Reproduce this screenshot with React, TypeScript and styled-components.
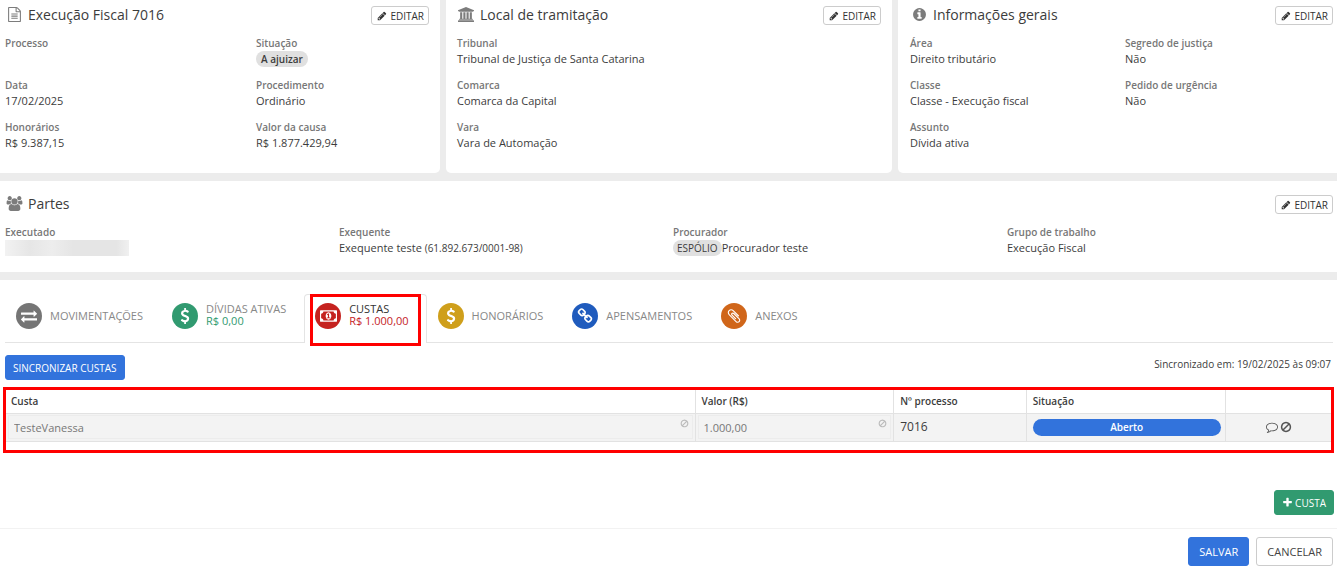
import React from 'react';
import styled, { createGlobalStyle } from 'styled-components';

const GlobalStyle = createGlobalStyle`
  *, *::before, *::after { box-sizing: border-box; }
  body {
    margin: 0;
    background: #ececec;
    color: #3c3c3c;
    font-family: 'Open Sans', 'Noto Sans', sans-serif;
    font-size: 11px;
    line-height: 16px;
  }
  button, input { font-family: inherit; }
`;

const glyphs = {
  file: { w: 1792, d: 'M1596 380q28 28 48 76t20 88v1152q0 40-28 68t-68 28h-1344q-40 0-68-28t-28-68v-1600q0-40 28-68t68-28h896q40 0 88 20t76 48zm-444-244v376h376q-10-29-22-41l-313-313q-12-12-41-22zm384 1528v-1024h-416q-40 0-68-28t-28-68v-416h-768v1536h1280zm-1024-864q0-14 9-23t23-9h704q14 0 23 9t9 23v64q0 14-9 23t-23 9h-704q-14 0-23-9t-9-23v-64zm736 224q14 0 23 9t9 23v64q0 14-9 23t-23 9h-704q-14 0-23-9t-9-23v-64q0-14 9-23t23-9h704zm0 256q14 0 23 9t9 23v64q0 14-9 23t-23 9h-704q-14 0-23-9t-9-23v-64q0-14 9-23t23-9h704z' },
  university: { w: 1920, d: 'M960 0l960 384v128h-128q0 26-20.5 45t-48.5 19h-1526q-28 0-48.5-19t-20.5-45h-128v-128zm-704 640h256v768h128v-768h256v768h128v-768h256v768h128v-768h256v768h59q28 0 48.5 19t20.5 45v64h-1664v-64q0-26 20.5-45t48.5-19h59zm1595 960q28 0 48.5 19t20.5 45v128h-1920v-128q0-26 20.5-45t48.5-19z' },
  info: { w: 1792, d: 'M1152 1376v-160q0-14-9-23t-23-9h-96v-512q0-14-9-23t-23-9h-320q-14 0-23 9t-9 23v160q0 14 9 23t23 9h96v320h-96q-14 0-23 9t-9 23v160q0 14 9 23t23 9h448q14 0 23-9t9-23zm-128-896v-160q0-14-9-23t-23-9h-192q-14 0-23 9t-9 23v160q0 14 9 23t23 9h192q14 0 23-9t9-23zm640 416q0 209-103 385.5t-279.5 279.5-385.5 103-385.5-103-279.5-279.5-103-385.5 103-385.5 279.5-279.5 385.5-103 385.5 103 279.5 279.5 103 385.5z' },
  users: { w: 2048, d: 'M657 896q-162 5-265 128h-134q-82 0-138-40.5t-56-118.5q0-353 124-353 6 0 43.5 21t97.5 42.5 119 21.5q67 0 133-23-5 37-5 66 0 159 81 256zm1071 637q0 120-73 189.5t-194 69.5h-874q-121 0-194-69.5t-73-189.5q0-53 3.5-103.5t14-109 26.5-108.5 43-97.5 62-81 85.5-53.5 111.5-20q10 0 43 21.5t73 48 107 48 135 21.5 135-21.5 107-48 73-48 43-21.5q61 0 111.5 20t85.5 53.5 62 81 43 97.5 26.5 108.5 14 109 3.5 103.5zm-1024-1277q0 106-75 181t-181 75-181-75-75-181 75-181 181-75 181 75 75 181zm704 384q0 159-112.5 271.5t-271.5 112.5-271.5-112.5-112.5-271.5 112.5-271.5 271.5-112.5 271.5 112.5 112.5 271.5zm576 225q0 78-56 118.5t-138 40.5h-134q-103-123-265-128 81-97 81-256 0-29-5-66 66 23 133 23 59 0 119-21.5t97.5-42.5 43.5-21q124 0 124 353zm-128-609q0 106-75 181t-181 75-181-75-75-181 75-181 181-75 181 75 75 181z' },
  pencil: { w: 1792, d: 'M491 1536l91-91-235-235-91 91v107h128v128h107zm523-928q0-22-22-22-10 0-17 7l-542 542q-7 7-7 17 0 22 22 22 10 0 17-7l542-542q7-7 7-17zm-54-192l416 416-832 832h-416v-416zm683 96q0 53-37 90l-166 166-416-416 166-165q36-38 90-38 53 0 91 38l235 234q37 39 37 91z' },
  exchange: { w: 1792, d: 'M1792 1184v192q0 13-9.5 22.5t-22.5 9.5h-1376v192q0 13-9.5 22.5t-22.5 9.5q-12 0-24-10l-319-320q-9-9-9-22 0-14 9-23l320-320q9-9 23-9 13 0 22.5 9.5t9.5 22.5v192h1376q13 0 22.5 9.5t9.5 22.5zm0-544q0 14-9 23l-320 320q-9 9-23 9-13 0-22.5-9.5t-9.5-22.5v-192h-1376q-13 0-22.5-9.5t-9.5-22.5v-192q0-13 9.5-22.5t22.5-9.5h1376v-192q0-14 9-23t23-9q12 0 24 10l319 319q9 9 9 23z' },
  dollar: { w: 1792, d: 'M1362 1185q0 153-99.5 263.5t-258.5 136.5v175q0 14-9 23t-23 9h-135q-13 0-22.5-9.5t-9.5-22.5v-175q-66-9-127.5-31t-101.5-44.5-74-48-46.5-37.5-17.5-18q-17-21-2-41l103-135q7-10 23-12 15-2 24 9l2 2q113 99 243 125 37 8 74 8 81 0 142.5-43t61.5-122q0-28-15-53t-33.5-42-58.5-37.5-66-32-80-32.5q-39-16-61.5-25t-61.5-26.5-62.5-31-56.5-35.5-53.5-42.5-43.5-49-35.5-58-21-66.5-8.5-78q0-138 98-242t255-134v-180q0-13 9.5-22.5t22.5-9.5h135q14 0 23 9t9 23v176q57 6 110.5 23t87 33.5 63.5 37.5 39 29 15 14q17 18 5 38l-81 146q-8 15-23 16-14 3-27-7-3-3-14.5-12t-39-26.5-58.5-32-74.5-26-85.5-11.5q-95 0-155 43t-60 111q0 26 8.5 48t29.5 41.5 39.5 33 56 31 60.5 27 70 27.5q53 20 81 31.5t76 35 75.5 42.5 62 50 53 63.5 31.5 76.5 13 94z' },
  money: { w: 1920, d: 'M768 1152h384v-96h-128v-448h-114l-148 137 77 80q42-37 55-57h2v288h-128v96zm512-256q0 70-21 142t-59.5 134-101.5 101-138 39-138-39-101.5-101-59.5-134-21-142 21-142 59.5-134 101.5-101 138-39 138 39 101.5 101 59.5 134 21 142zm512 256v-512q-106 0-181-75t-75-181h-1152q0 106-75 181t-181 75v512q106 0 181 75t75 181h1152q0-106 75-181t181-75zm128-832v1152q0 26-19 45t-45 19h-1792q-26 0-45-19t-19-45v-1152q0-26 19-45t45-19h1792q26 0 45 19t19 45z' },
  link: { w: 1792, d: 'M1520 1216q0-40-28-68l-208-208q-28-28-68-28-42 0-72 32 3 3 19 18.5t21.5 21.5 15 19 13 25.5 3.5 27.5q0 40-28 68t-68 28q-15 0-27.5-3.5t-25.5-13-19-15-21.5-21.5-18.5-19q-33 31-33 73 0 40 28 68l206 207q27 27 68 27 40 0 68-26l147-146q28-28 28-67zm-703-705q0-40-28-68l-206-207q-28-28-68-28-39 0-68 27l-147 146q-28 28-28 67 0 40 28 68l208 208q27 27 68 27 42 0 72-31-3-3-19-18.5t-21.5-21.5-15-19-13-25.5-3.5-27.5q0-40 28-68t68-28q15 0 27.5 3.5t25.5 13 19 15 21.5 21.5 18.5 19q33-31 33-73zm895 705q0 120-85 203l-147 146q-83 83-203 83-121 0-204-85l-206-207q-83-83-83-203 0-123 88-209l-88-88q-86 88-208 88-120 0-204-84l-208-208q-84-84-84-204t85-203l147-146q83-83 203-83 121 0 204 85l206 207q83 83 83 203 0 123-88 209l88 88q86-88 208-88 120 0 204 84l208 208q84 84 84 204z' },
  clip: { w: 1792, d: 'M1596 1385q0 117-79 196t-196 79q-135 0-235-100l-777-776q-113-115-113-271 0-159 110-270t269-111q158 0 273 113l605 606q10 10 10 22 0 16-30.5 46.5t-46.5 30.5q-13 0-23-10l-606-607q-79-77-181-77-106 0-179 75t-73 181q0 105 76 181l776 777q63 63 145 63 64 0 106-42t42-106q0-82-63-145l-581-581q-26-24-60-24-29 0-48 19t-19 48q0 32 25 59l410 410q10 10 10 22 0 16-31 47t-47 31q-12 0-22-10l-410-410q-63-61-63-149 0-82 57-139t139-57q88 0 149 63l581 581q100 98 100 235z' },
  ban: { w: 1792, d: 'M1440 893q0-161-87-295l-754 753q137 89 297 89 111 0 211.5-43.5t173.5-116.5 116-174.5 43-212.5zm-999 299l755-754q-135-91-300-91-148 0-273 73t-198 199-73 274q0 162 89 299zm1223-299q0 157-61 300t-163.5 246-245 164-298.5 61-298.5-61-245-164-163.5-246-61-300 61-299.5 163.5-245.5 245-164 298.5-61 298.5 61 245 164 163.5 245.5 61 299.5z' },
  comment: { w: 1792, d: 'M896 384q-204 0-381.5 69.5t-282 187.5-104.5 255q0 112 71.5 213.5t201.5 175.5l87 50-27 96q-24 91-70 172 152-63 275-171l43-38 57 6q69 8 130 8 204 0 381.5-69.5t282-187.5 104.5-255-104.5-255-282-187.5-381.5-69.5zm896 512q0 174-120 321.5t-326 233-450 85.5q-70 0-145-8-198 175-460 242-49 14-114 22h-5q-15 0-27-10.5t-16-27.5v-1q-3-4-.5-12t2-10 4.5-9.5l6-9 7-8.5 8-9q7-8 31-34.5t34.5-38 31-39.5 32.5-51 27-59 26-76q-157-89-247.5-220t-90.5-281q0-174 120-321.5t326-233 450-85.5 450 85.5 326 233 120 321.5z' },
  plus: { w: 1792, d: 'M1600 736v192q0 40-28 68t-68 28h-416v416q0 40-28 68t-68 28h-192q-40 0-68-28t-28-68v-416h-416q-40 0-68-28t-28-68v-192q0-40 28-68t68-28h416v-416q0-40 28-68t68-28h192q40 0 68 28t28 68v416h416q40 0 68 28t28 68z' },
};

type GlyphName = keyof typeof glyphs;

const Svg = styled.svg`
  display: block;
  flex: none;
  fill: currentColor;
`;

function Icon({ name, size }: { name: GlyphName; size: number }) {
  const { w, d } = glyphs[name];
  return (
    <Svg viewBox={`0 0 ${w} 1792`} width={Math.round((size * w) / 1792)} height={size} aria-hidden="true">
      <path d={d} />
    </Svg>
  );
}

const Page = styled.main`
  display: flex;
  flex-direction: column;
  gap: 8px;
`;

const TopCards = styled.div`
  display: grid;
  grid-template-columns: 440fr 446fr 439fr;
  gap: 6px;
`;

const Card = styled.section<{ $side?: 'left' | 'middle' | 'right' }>`
  background: #fff;
  padding: 6px 4px 22px ${p => (p.$side === 'right' ? 12 : p.$side === 'middle' ? 11 : 5)}px;
  padding-right: ${p => (p.$side === 'left' || p.$side === 'middle' ? 11 : 4)}px;
  border-radius: ${p => (p.$side === 'left' ? '0 0 5px 0' : p.$side === 'middle' ? '0 0 5px 5px' : p.$side === 'right' ? '0 0 0 5px' : '0')};
`;

const PartiesCard = styled(Card)`
  padding: 14px 0 16px 5px;
`;

const CardHeader = styled.header`
  display: flex;
  align-items: flex-start;
  height: 19px;
  margin-bottom: 10px;
  ${PartiesCard} & { padding-right: 4px; }
`;

const IconSlot = styled.span`
  display: flex;
  justify-content: center;
  width: 18px;
  margin-right: 5px;
  padding-top: 1px;
  color: #7c7c7c;
`;

const Title = styled.h2`
  flex: 1;
  margin: 0;
  font-size: 14px;
  line-height: 17px;
  font-weight: 400;
`;

const EditButton = styled.button`
  display: flex;
  align-items: center;
  gap: 3px;
  height: 19px;
  padding: 0 4px 0 5px;
  border: 1px solid #ccc;
  border-radius: 3px;
  background: #fff;
  color: #333;
  font-size: 10px;
  line-height: 16px;
`;

const Fields = styled.dl<{ $columns: string }>`
  display: grid;
  grid-template-columns: ${p => p.$columns};
  grid-auto-rows: 32px;
  row-gap: 10px;
  margin: 0;
`;

const Label = styled.dt`
  font-size: 10px;
  line-height: 16px;
  font-weight: 600;
  color: #777;
`;

const Value = styled.dd`
  display: flex;
  align-items: center;
  height: 16px;
  margin: 0;
  white-space: pre;
`;

const Small = styled.span`
  font-size: 10px;
`;

const Badge = styled.span<{ $strong?: boolean }>`
  padding: 0 ${p => (p.$strong ? 5 : 4)}px;
  border-radius: 8px;
  background: #e0e0e0;
  font-size: 10px;
  line-height: 16px;
  font-weight: ${p => (p.$strong ? 600 : 400)};
`;

const Redacted = styled.span`
  width: 124px;
  height: 16px;
  background: linear-gradient(90deg, #f2f2f2, #e6e6e6 20%, #ededed 38%, #e5e5e5 55%, #e5e5e5 90%, #f0f0f0);
`;

const Panel = styled.section`
  background: #fff;
  min-height: 291px;
  padding: 14px 4px 5px 5px;
`;

const TabBar = styled.nav`
  display: flex;
  height: 49px;
  border-bottom: 1px solid #e4e4e4;
`;

const Tab = styled.a<{ $active?: boolean }>`
  display: flex;
  align-items: center;
  gap: 8px;
  height: 49px;
  padding: 0 17px 6px 10px;
  border: 1px solid ${p => (p.$active ? '#e4e4e4' : 'transparent')};
  border-bottom: 0;
  border-radius: 4px 4px 0 0;
  background: ${p => (p.$active ? '#fff' : 'transparent')};
  color: ${p => (p.$active ? '#333' : '#888')};
  text-decoration: none;
  white-space: nowrap;
  line-height: 12px;
`;

const Disc = styled.span<{ $color: string }>`
  display: flex;
  align-items: center;
  justify-content: center;
  width: 26px;
  height: 26px;
  border-radius: 50%;
  background: ${p => p.$color};
  color: #fff;
`;

const TabText = styled.span<{ $stacked: boolean }>`
  display: flex;
  flex-direction: column;
  padding-bottom: ${p => (p.$stacked ? 3 : 0)}px;
`;

const Amount = styled.span<{ $color: string }>`
  color: ${p => p.$color};
`;

const ActiveMark = styled.span`
  position: absolute;
  inset: 0 6px -4px 6px;
  border: 3px solid #f00;
  pointer-events: none;
`;

const ActiveTabWrap = styled.div`
  position: relative;
`;

const SyncRow = styled.div`
  display: flex;
  justify-content: space-between;
  align-items: flex-start;
  margin-top: 12px;
  padding-right: 2px;
  font-size: 10px;
  line-height: 18px;
`;

const Button = styled.button<{ $bg: string; $large?: boolean; $outline?: boolean }>`
  display: flex;
  align-items: center;
  gap: 2px;
  height: ${p => (p.$large ? 29 : 25)}px;
  padding: 0 ${p => (p.$large ? 10 : 7)}px;
  border: 1px solid ${p => (p.$outline ? '#ccc' : p.$bg)};
  border-radius: 3px;
  background: ${p => p.$bg};
  color: ${p => (p.$outline ? '#444' : '#fff')};
  font-size: ${p => (p.$large ? 11 : 10)}px;
  line-height: 16px;
`;

const TableFrame = styled.div`
  height: 66px;
  margin: 7px -1px 0 -2px;
  border: 3px solid #f00;
`;

const Table = styled.table`
  width: 100%;
  table-layout: fixed;
  border-collapse: collapse;
`;

const HeadCell = styled.th<{ $width: string }>`
  width: ${p => p.$width};
  height: 23px;
  padding: 0 5px;
  text-align: left;
  font-size: 10px;
  line-height: 16px;
  font-weight: 600;
  border-bottom: 1px solid #e2e2e2;
  & + & { border-left: 1px solid #e2e2e2; padding-left: 6px; }
`;

const Cell = styled.td<{ $flush?: boolean }>`
  height: 28px;
  padding: ${p => (p.$flush ? '1px 2px' : '0 4px 0 6px')};
  background: #f3f3f3;
  border-bottom: 1px solid #e2e2e2;
  font-size: 12px;
  & + & { border-left: 1px solid #e2e2e2; }
`;

const InputBox = styled.div`
  display: flex;
  height: 24px;
  padding: 0 3px 0 5px;
  border: 1px solid #ececec;
  color: #bbb;
  svg { margin-top: 3px; }
`;

const TextInput = styled.input`
  flex: 1;
  min-width: 0;
  padding: 0;
  border: 0;
  background: transparent;
  color: #777;
  font-size: 11px;
`;

const Status = styled.span`
  display: block;
  border-radius: 9px;
  background: #3273dc;
  color: #fff;
  font-size: 10px;
  line-height: 17px;
  font-weight: 600;
  text-align: center;
`;

const RowActions = styled.div`
  display: flex;
  justify-content: center;
  gap: 2px;
`;

const IconButton = styled.button`
  padding: 0;
  border: 0;
  background: none;
  color: #555;
`;

const AddRow = styled.div`
  display: flex;
  justify-content: flex-end;
  margin: 37px -1px 0 0;
`;

const Footer = styled.footer`
  display: flex;
  justify-content: flex-end;
  gap: 7px;
  margin: 13px -4px 0 -5px;
  padding: 8px 4px 0;
  border-top: 1px solid #f2f2f2;
`;

function Edit() {
  return (
    <EditButton type="button">
      <Icon name="pencil" size={10} />
      EDITAR
    </EditButton>
  );
}

function Header({ icon, title }: { icon: GlyphName; title: string }) {
  return (
    <CardHeader>
      <IconSlot><Icon name={icon} size={15} /></IconSlot>
      <Title>{title}</Title>
      <Edit />
    </CardHeader>
  );
}

function Field({ label, children }: { label: string; children?: React.ReactNode }) {
  return (
    <div>
      <Label>{label}</Label>
      <Value>{children}</Value>
    </div>
  );
}

type TabData = { icon: GlyphName; color: string; label: string; amount?: string; active?: boolean };

const tabs: TabData[] = [
  { icon: 'exchange', color: '#757575', label: 'MOVIMENTAÇÕES' },
  { icon: 'dollar', color: '#319a70', label: 'DÍVIDAS ATIVAS', amount: 'R$ 0,00' },
  { icon: 'money', color: '#c5221f', label: 'CUSTAS', amount: 'R$ 1.000,00', active: true },
  { icon: 'dollar', color: '#cf9f1b', label: 'HONORÁRIOS' },
  { icon: 'link', color: '#1f5bbd', label: 'APENSAMENTOS' },
  { icon: 'clip', color: '#d0661a', label: 'ANEXOS' },
];

function TabItem({ tab }: { tab: TabData }) {
  const link = (
    <Tab href="#" $active={tab.active}>
      <Disc $color={tab.color}><Icon name={tab.icon} size={16} /></Disc>
      <TabText $stacked={Boolean(tab.amount)}>
        <span>{tab.label}</span>
        {tab.amount && <Amount $color={tab.color}>{tab.amount}</Amount>}
      </TabText>
    </Tab>
  );
  return tab.active ? <ActiveTabWrap>{link}<ActiveMark /></ActiveTabWrap> : link;
}

export default function App() {
  return (
    <>
      <GlobalStyle />
      <Page>
        <TopCards>
          <Card $side="left">
            <Header icon="file" title="Execução Fiscal 7016" />
            <Fields $columns="251fr 173fr">
              <Field label="Processo" />
              <Field label="Situação"><Badge $strong>A ajuizar</Badge></Field>
              <Field label="Data">17/02/2025</Field>
              <Field label="Procedimento">Ordinário</Field>
              <Field label="Honorários">R$ 9.387,15</Field>
              <Field label="Valor da causa">R$ 1.877.429,94</Field>
            </Fields>
          </Card>
          <Card $side="middle">
            <Header icon="university" title="Local de tramitação" />
            <Fields $columns="1fr">
              <Field label="Tribunal">Tribunal de Justiça de Santa Catarina</Field>
              <Field label="Comarca">Comarca da Capital</Field>
              <Field label="Vara">Vara de Automação</Field>
            </Fields>
          </Card>
          <Card $side="right">
            <Header icon="info" title="Informações gerais" />
            <Fields $columns="215fr 208fr">
              <Field label="Área">Direito tributário</Field>
              <Field label="Segredo de justiça">Não</Field>
              <Field label="Classe">Classe - Execução fiscal</Field>
              <Field label="Pedido de urgência">Não</Field>
              <Field label="Assunto">Dívida ativa</Field>
            </Fields>
          </Card>
        </TopCards>

        <PartiesCard>
          <Header icon="users" title="Partes" />
          <Fields $columns="334fr 334fr 334fr 330fr">
            <Field label="Executado"><Redacted /></Field>
            <Field label="Exequente">Exequente teste <Small>(61.892.673/0001-98)</Small></Field>
            <Field label="Procurador"><Badge>ESPÓLIO</Badge>Procurador teste</Field>
            <Field label="Grupo de trabalho">Execução Fiscal</Field>
          </Fields>
        </PartiesCard>

        <Panel>
          <TabBar>
            {tabs.map(tab => <TabItem key={tab.label} tab={tab} />)}
          </TabBar>
          <SyncRow>
            <Button type="button" $bg="#3273dc">SINCRONIZAR CUSTAS</Button>
            <span>Sincronizado em: 19/02/2025 às 09:07</span>
          </SyncRow>
          <TableFrame>
            <Table>
              <thead>
                <tr>
                  <HeadCell scope="col" $width="52%">Custa</HeadCell>
                  <HeadCell scope="col" $width="15%">Valor (R$)</HeadCell>
                  <HeadCell scope="col" $width="10%">Nº processo</HeadCell>
                  <HeadCell scope="col" $width="15%">Situação</HeadCell>
                  <HeadCell scope="col" $width="8%" aria-label="Ações" />
                </tr>
              </thead>
              <tbody>
                <tr>
                  <Cell $flush>
                    <InputBox>
                      <TextInput aria-label="Custa" defaultValue="TesteVanessa" readOnly />
                      <Icon name="ban" size={9} />
                    </InputBox>
                  </Cell>
                  <Cell $flush>
                    <InputBox>
                      <TextInput aria-label="Valor (R$)" defaultValue="1.000,00" readOnly />
                      <Icon name="ban" size={9} />
                    </InputBox>
                  </Cell>
                  <Cell>7016</Cell>
                  <Cell><Status>Aberto</Status></Cell>
                  <Cell>
                    <RowActions>
                      <IconButton type="button" aria-label="Comentar"><Icon name="comment" size={12} /></IconButton>
                      <IconButton type="button" aria-label="Cancelar custa"><Icon name="ban" size={12} /></IconButton>
                    </RowActions>
                  </Cell>
                </tr>
              </tbody>
            </Table>
          </TableFrame>
          <AddRow>
            <Button type="button" $bg="#319a70"><Icon name="plus" size={11} />CUSTA</Button>
          </AddRow>
          <Footer>
            <Button type="button" $bg="#3273dc" $large>SALVAR</Button>
            <Button type="button" $bg="#fff" $large $outline>CANCELAR</Button>
          </Footer>
        </Panel>
      </Page>
    </>
  );
}
